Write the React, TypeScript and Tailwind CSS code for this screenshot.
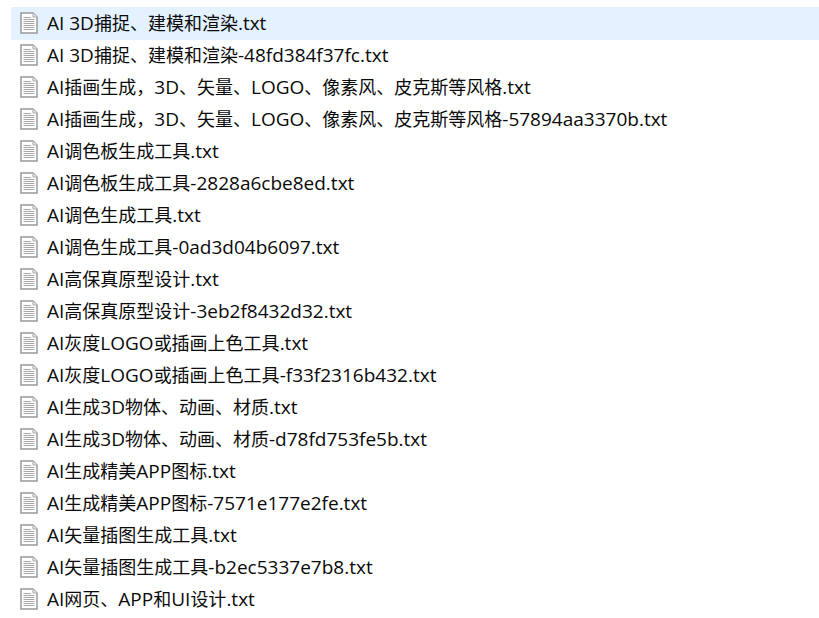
const files = [
  "AI 3D捕捉、建模和渲染.txt",
  "AI 3D捕捉、建模和渲染-48fd384f37fc.txt",
  "AI插画生成，3D、矢量、LOGO、像素风、皮克斯等风格.txt",
  "AI插画生成，3D、矢量、LOGO、像素风、皮克斯等风格-57894aa3370b.txt",
  "AI调色板生成工具.txt",
  "AI调色板生成工具-2828a6cbe8ed.txt",
  "AI调色生成工具.txt",
  "AI调色生成工具-0ad3d04b6097.txt",
  "AI高保真原型设计.txt",
  "AI高保真原型设计-3eb2f8432d32.txt",
  "AI灰度LOGO或插画上色工具.txt",
  "AI灰度LOGO或插画上色工具-f33f2316b432.txt",
  "AI生成3D物体、动画、材质.txt",
  "AI生成3D物体、动画、材质-d78fd753fe5b.txt",
  "AI生成精美APP图标.txt",
  "AI生成精美APP图标-7571e177e2fe.txt",
  "AI矢量插图生成工具.txt",
  "AI矢量插图生成工具-b2ec5337e7b8.txt",
  "AI网页、APP和UI设计.txt",
];

const TextFileIcon = () => (
  <svg width="18" height="22" viewBox="0 0 18 22" className="shrink-0">
    <path d="M1 1H13L17 5V21H1Z" fill="#ffffff" stroke="#9a9a9a" strokeWidth="1.5" />
    <path d="M13 1V5H17" fill="#e8e8e8" stroke="#a8a8a8" strokeWidth="1" />
    <path
      d="M3.5 5.5H11M3.5 7.5H14.5M3.5 9.5H14.5M3.5 11.5H14.5M3.5 13.5H14.5M3.5 15.5H14.5M3.5 17.5H14.5"
      stroke="#a8a8a8"
      strokeWidth="1"
    />
  </svg>
);

// latin runs sit a little larger than the CJK ones in the reference
const FileName = ({ name }: { name: string }) => (
  <span>
    {name.split(/([\x00-\x7f]+)/).map((part, index) =>
      index % 2 === 1 ? (
        <span key={index} className="text-[19px]">
          {part}
        </span>
      ) : (
        part
      )
    )}
  </span>
);

const App = () => {
  return (
    <div className="w-[819px] h-[618px] overflow-hidden bg-white pt-[7px] pl-[11px] font-['Open_Sans','Noto_Sans_CJK_SC',sans-serif] text-[18px] text-[#0a0a0a]">
      {files.map((name, index) => (
        <div
          key={index}
          className={`flex items-center pl-[9px] gap-[9px] whitespace-nowrap ${index === 0 ? "h-[33px] pb-px -mb-px bg-[#e3f2fe]" : "h-[32px]"}`}
        >
          <TextFileIcon />
          <FileName name={name} />
        </div>
      ))}
    </div>
  );
};

export default App;
